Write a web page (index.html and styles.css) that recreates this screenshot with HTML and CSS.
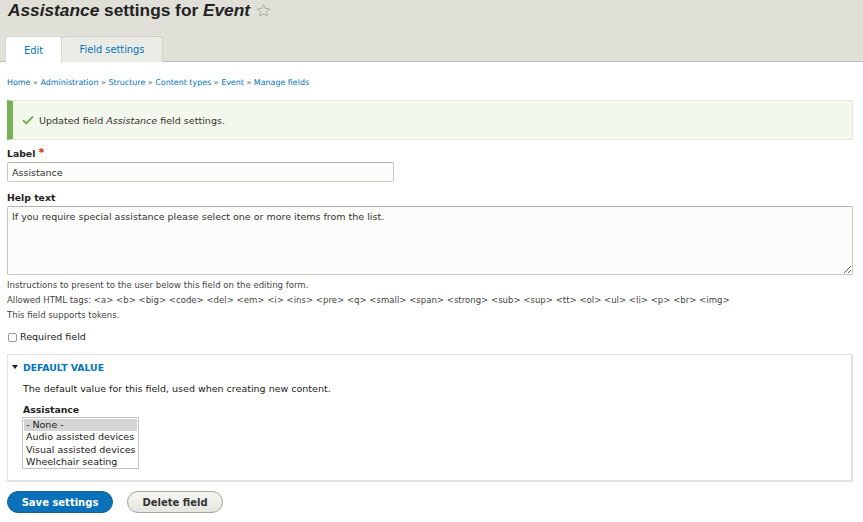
FILE: index.html
```html
<!DOCTYPE html>
<html>
<head>
<meta charset="utf-8">
<link rel="stylesheet" href="styles.css">
</head>
<body>
<header class="page-head">
  <h1 class="title"><span><em>Assistance</em> settings for <em>Event</em></span>
    <svg class="star" width="15" height="15" viewBox="0 0 24 24"><path d="M12 2.5l2.9 6.3 6.8.7-5.1 4.6 1.5 6.8L12 17.4l-6.1 3.5 1.5-6.8-5.1-4.6 6.8-.7z" fill="none" stroke="#a7a79c" stroke-width="1.4" stroke-linejoin="round"/></svg>
  </h1>
  <ul class="tabs">
    <li class="tab tab-active"><a href="#">Edit</a></li>
    <li class="tab"><a href="#">Field settings</a></li>
  </ul>
</header>
<main class="content">
  <nav class="breadcrumb">
    <a href="#">Home</a> <span class="sep">»</span> <a href="#">Administration</a> <span class="sep">»</span> <a href="#">Structure</a> <span class="sep">»</span> <a href="#">Content types</a> <span class="sep">»</span> <a href="#">Event</a> <span class="sep">»</span> <a href="#">Manage fields</a>
  </nav>
  <div class="message">
    <svg class="check" width="12" height="10" viewBox="0 0 12 10"><path d="M1 5.2l3.2 3.2L11 1.5" fill="none" stroke="#73b355" stroke-width="2"/></svg>
    <span>Updated field <em>Assistance</em> field settings.</span>
  </div>
  <form class="form">
    <div class="item">
      <label class="label">Label <span class="req">*</span></label>
      <input class="text-input" type="text" value="Assistance">
    </div>
    <div class="item">
      <label class="label">Help text</label>
      <textarea class="textarea">If you require special assistance please select one or more items from the list.</textarea>
      <div class="desc">
        <p>Instructions to present to the user below this field on the editing form.</p>
        <p>Allowed HTML tags: &lt;a&gt; &lt;b&gt; &lt;big&gt; &lt;code&gt; &lt;del&gt; &lt;em&gt; &lt;i&gt; &lt;ins&gt; &lt;pre&gt; &lt;q&gt; &lt;small&gt; &lt;span&gt; &lt;strong&gt; &lt;sub&gt; &lt;sup&gt; &lt;tt&gt; &lt;ol&gt; &lt;ul&gt; &lt;li&gt; &lt;p&gt; &lt;br&gt; &lt;img&gt;</p>
        <p>This field supports tokens.</p>
      </div>
    </div>
    <div class="check-item">
      <span class="checkbox"></span><span>Required field</span>
    </div>
    <div class="details">
      <div class="summary"><span class="tri"></span>DEFAULT VALUE</div>
      <div class="details-body">
        <p class="details-desc">The default value for this field, used when creating new content.</p>
        <div class="label">Assistance</div>
        <div class="listbox">
          <div class="opt opt-sel">- None -</div>
          <div class="opt">Audio assisted devices</div>
          <div class="opt">Visual assisted devices</div>
          <div class="opt">Wheelchair seating</div>
        </div>
      </div>
    </div>
    <div class="actions">
      <button type="button" class="btn btn-primary">Save settings</button>
      <button type="button" class="btn btn-secondary">Delete field</button>
    </div>
  </form>
</main>
</body>
</html>
```
FILE: styles.css
```css
* { box-sizing: border-box; }
html, body { margin: 0; padding: 0; background: #fff; }
body {
  font-family: "DejaVu Sans", Verdana, sans-serif;
  font-size: 9px;
  color: #222;
  width: 863px;
  height: 522px;
  overflow: hidden;
}
a { color: #0074bd; text-decoration: none; }
p { margin: 0; }

.page-head {
  background: #e0e0d8;
  border-bottom: 1px solid #bebeb7;
  padding: 0 0 0 5px;
  height: 62px;
}
.title {
  margin: 0 0 0 3px;
  font-family: "Liberation Sans", Arial, sans-serif;
  font-size: 17.3px;
  line-height: 20px;
  height: 20px;
  font-weight: bold;
  color: #222;
  display: flex;
  align-items: center;
  gap: 6px;
  white-space: nowrap;
}
.title span { line-height: 20px; }
.title em { font-style: italic; }

.tabs {
  list-style: none;
  margin: 16px 0 0 0;
  padding: 0;
  display: flex;
}
.tab {
  height: 26px;
  border: 1px solid #cfcfc8;
  border-bottom: none;
  border-radius: 4px 4px 0 0;
  background: #ebebe5;
  display: flex;
  align-items: center;
  justify-content: center;
  font-size: 9.8px;
}
.tab:first-child { width: 57px; }
.tab:last-child { width: 101px; border-left: none; }
.tab-active { background: #fff; height: 27px; border-color: #d8d8d2; }
.tab a { color: #0074bd; }

.content { padding: 0 10px 0 7px; }

.breadcrumb {
  margin-top: 15px;
  font-size: 7.95px;
  line-height: 12px;
}
.breadcrumb .sep { color: #666; }

.message {
  margin-top: 11px;
  height: 40px;
  background: #f3f8ed;
  border: 1px solid #e1e9da;
  border-left: 6px solid #77b259;
  display: flex;
  align-items: center;
  padding-left: 9px;
  gap: 5px;
  font-size: 9.55px;
  color: #333;
}

.form { margin: 0; }
.item { margin-top: 8px; }
.item + .item { margin-top: 10px; }
.label {
  display: block;
  font-weight: bold;
  font-size: 9.3px;
  line-height: 12px;
  color: #222;
}
.req { color: #e32700; font-size: 11px; vertical-align: top; line-height: 10px; }
.text-input {
  display: block;
  margin-top: 2px;
  width: 387px;
  height: 20px;
  border: 1px solid #c9c9c4;
  border-top-color: #b4b4b0;
  border-radius: 2px;
  background: #fcfcfa;
  font-family: inherit;
  font-size: 9.5px;
  padding: 0 4px;
  color: #333;
}
.textarea {
  display: block;
  margin-top: 2px;
  width: 846px;
  height: 69px;
  border: 1px solid #c9c9c4;
  border-top-color: #b4b4b0;
  border-radius: 2px;
  background: #fcfcfa;
  font-family: inherit;
  font-size: 9.5px;
  line-height: 13px;
  padding: 3px 4px;
  color: #333;
  resize: both;
}
.desc {
  margin-top: 3px;
  font-size: 8.55px;
  line-height: 15px;
  color: #444;
}

.check-item {
  margin-top: 8px;
  display: flex;
  align-items: center;
  gap: 3px;
  font-size: 9.5px;
  line-height: 12px;
}
.checkbox {
  width: 9px;
  height: 9px;
  border: 1px solid #999;
  border-radius: 2px;
  background: #fff;
  margin-left: 1px;
}

.details {
  margin-top: 11px;
  width: 846px;
  height: 128px;
  border: 1px solid #e2e2e2;
  border-width: 1px 2px 2px 1px;
}
.summary {
  padding: 7px 0 0 4px;
  font-size: 9.3px;
  line-height: 12px;
  font-weight: bold;
  color: #0074bd;
  display: flex;
  align-items: center;
  gap: 5px;
}
.tri {
  width: 0; height: 0;
  border-left: 3px solid transparent;
  border-right: 3px solid transparent;
  border-top: 4px solid #222;
  margin-top: -3px;
}
.details-body { padding: 9px 0 0 15px; }
.details-desc { font-size: 9.5px; line-height: 12px; color: #222; }
.details-body .label { margin-top: 9px; }
.listbox {
  margin-top: 1px;
  margin-left: -1px;
  width: 117px;
  height: 52px;
  border: 1px solid #c4c4c4;
  padding: 1px 1px;
  font-size: 9.5px;
  line-height: 12.4px;
  color: #222;
}
.opt { padding-left: 2px; }
.opt-sel { background: #d4d4d4; }

.actions {
  margin-top: 9px;
  display: flex;
  gap: 14px;
}
.btn {
  height: 22px;
  border-radius: 11px;
  font-family: inherit;
  font-size: 10px;
  font-weight: bold;
  padding: 0;
}
.btn-primary {
  width: 106px;
  background: #0a71b9;
  border: 1px solid #1c5f94;
  color: #fff;
}
.btn-secondary {
  width: 96px;
  background: linear-gradient(#f6f6f3, #e6e6e0);
  border: 1px solid #a6a6a0;
  color: #333;
}
```
